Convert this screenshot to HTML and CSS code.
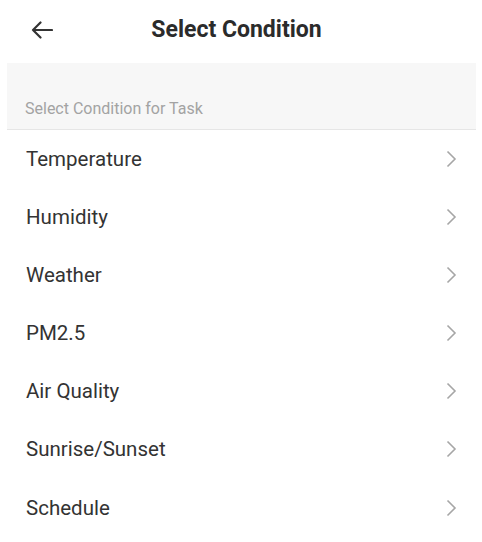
FILE: index.html
```html
<!DOCTYPE html>
<html>
<head>
<meta charset="utf-8">
<link rel="stylesheet" href="styles.css">
</head>
<body>
<div class="app">
  <header class="topbar">
    <svg class="back" width="22" height="18" viewBox="0 0 22 18"><path d="M21 9H2M9.5 1.5L2 9l7.5 7.5" fill="none" stroke="#333" stroke-width="2.2" stroke-linecap="round" stroke-linejoin="round"/></svg>
    <h1 class="title">Select Condition</h1>
  </header>
  <div class="section">Select Condition for Task</div>
  <ul class="list">
    <li class="row"><span>Temperature</span><svg class="chev" width="11" height="18" viewBox="0 0 11 18"><path d="M1.5 1.5L9 9l-7.5 7.5" fill="none" stroke="#a6a6a6" stroke-width="1.6"/></svg></li>
    <li class="row"><span>Humidity</span><svg class="chev" width="11" height="18" viewBox="0 0 11 18"><path d="M1.5 1.5L9 9l-7.5 7.5" fill="none" stroke="#a6a6a6" stroke-width="1.6"/></svg></li>
    <li class="row"><span>Weather</span><svg class="chev" width="11" height="18" viewBox="0 0 11 18"><path d="M1.5 1.5L9 9l-7.5 7.5" fill="none" stroke="#a6a6a6" stroke-width="1.6"/></svg></li>
    <li class="row"><span>PM2.5</span><svg class="chev" width="11" height="18" viewBox="0 0 11 18"><path d="M1.5 1.5L9 9l-7.5 7.5" fill="none" stroke="#a6a6a6" stroke-width="1.6"/></svg></li>
    <li class="row"><span>Air Quality</span><svg class="chev" width="11" height="18" viewBox="0 0 11 18"><path d="M1.5 1.5L9 9l-7.5 7.5" fill="none" stroke="#a6a6a6" stroke-width="1.6"/></svg></li>
    <li class="row"><span>Sunrise/Sunset</span><svg class="chev" width="11" height="18" viewBox="0 0 11 18"><path d="M1.5 1.5L9 9l-7.5 7.5" fill="none" stroke="#a6a6a6" stroke-width="1.6"/></svg></li>
    <li class="row last"><span>Schedule</span><svg class="chev" width="11" height="18" viewBox="0 0 11 18"><path d="M1.5 1.5L9 9l-7.5 7.5" fill="none" stroke="#a6a6a6" stroke-width="1.6"/></svg></li>
  </ul>
</div>
</body>
</html>
```
FILE: styles.css
```css
html, body {
  margin: 0;
  padding: 0;
  background: #fff;
}
body {
  font-family: Roboto, "Liberation Sans", Arial, sans-serif;
  color: #333;
}
.app {
  width: 482px;
}
.topbar {
  position: relative;
  height: 63px;
  display: flex;
  align-items: center;
  justify-content: center;
  padding-right: 9px;
}
.back {
  position: absolute;
  left: 31px;
  top: 21px;
}
.title {
  margin: -4px 0 0 0;
  font-size: 23px;
  font-weight: 700;
  color: #2b2b2b;
}
.section {
  margin: 0 6px 0 7px;
  height: 67px;
  box-sizing: border-box;
  background: #f7f7f7;
  border-bottom: 1px solid #e6e6e6;
  display: flex;
  align-items: flex-end;
  padding: 0 0 11px 18px;
  font-size: 16px;
  color: #a3a3a3;
}
.list {
  list-style: none;
  margin: 0;
  padding: 0;
}
.row {
  height: 58px;
  display: flex;
  align-items: center;
  justify-content: space-between;
  padding: 0 25px 0 26px;
  font-size: 20.5px;
  color: #333;
}
.row.last {
  height: 60px;
  padding-top: 0;
}
.chev {
  display: block;
}
```
